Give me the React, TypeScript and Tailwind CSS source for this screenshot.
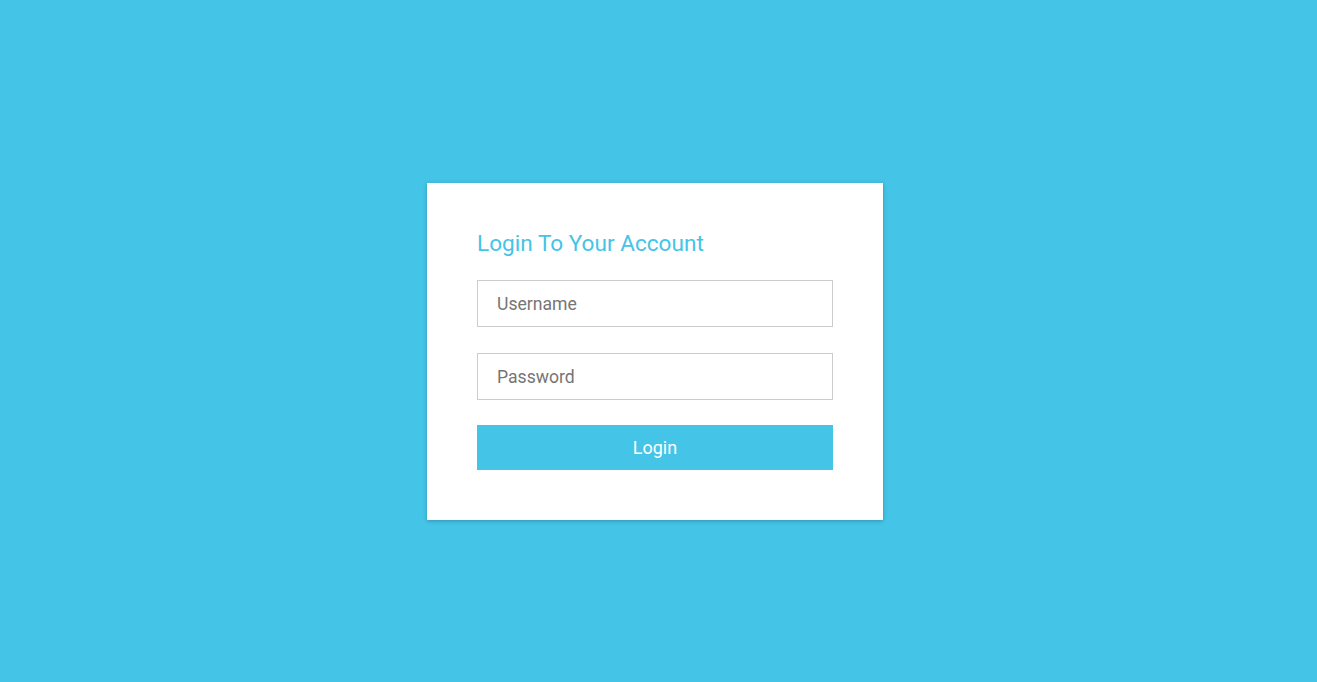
export default function App() {
  return (
    <div
      className="min-h-screen w-full bg-[#44c4e7] flex justify-center pt-[183px] pr-[7px]"
      style={{ fontFamily: 'Roboto, "Liberation Sans", sans-serif' }}
    >
      <form
        className="w-[456px] h-[337px] bg-white shadow-[0_1px_4px_rgba(0,0,0,0.25)] px-[50px] pt-[44px]"
        onSubmit={(e) => e.preventDefault()}
      >
        <h1 className="text-[22.6px] leading-[33px] text-[#44c4e7] font-normal mb-[20px]">
          Login To Your Account
        </h1>
        <input
          type="text"
          placeholder="Username"
          className="block w-full h-[47px] border border-[#cccccc] px-[19px] text-[17.6px] text-[#555] placeholder:text-[#757575] outline-none"
        />
        <input
          type="password"
          placeholder="Password"
          className="block w-full h-[47px] mt-[26px] border border-[#cccccc] px-[19px] text-[17.6px] text-[#555] placeholder:text-[#757575] outline-none"
        />
        <button
          type="submit"
          className="block w-full h-[45px] mt-[25px] bg-[#44c4e7] text-white text-[18px]"
        >
          Login
        </button>
      </form>
    </div>
  );
}
